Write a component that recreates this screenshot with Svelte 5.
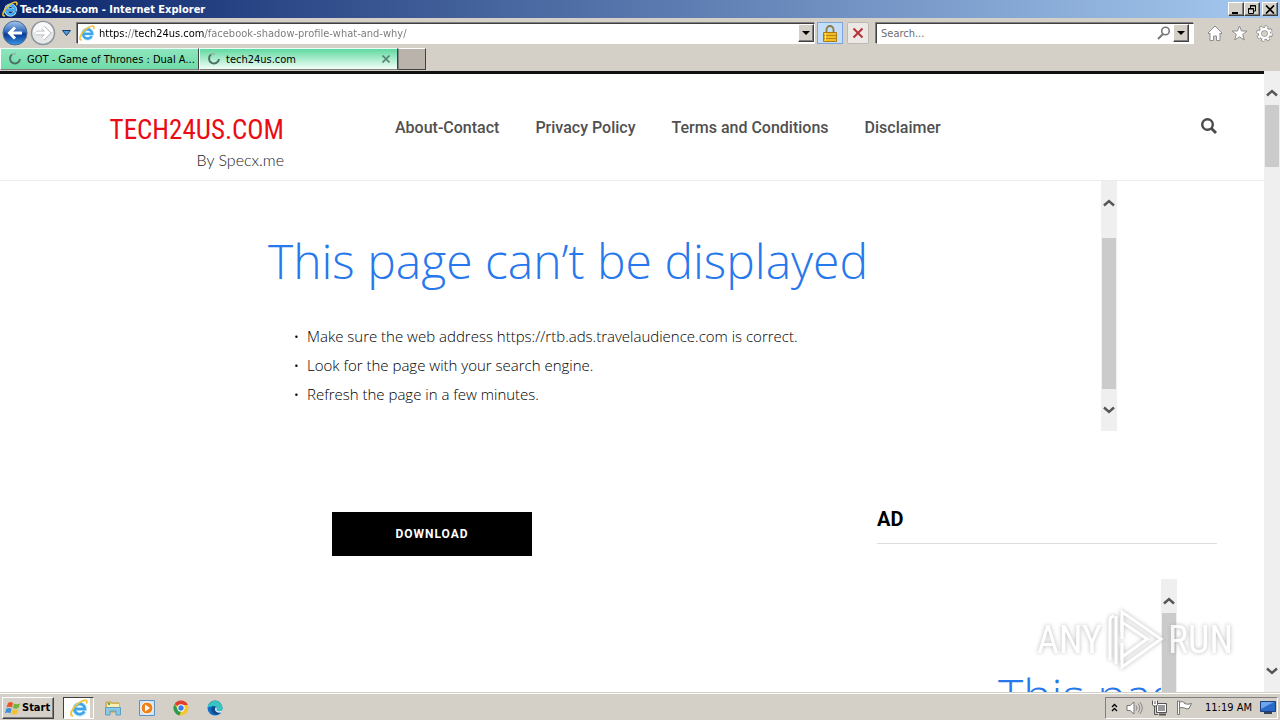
<script>
  let address = $state('https://tech24us.com/facebook-shadow-profile-what-and-why/');
  let query = $state('');

  const menu = [
    { href: '/about-contact', title: 'About-Contact' },
    { href: '/privacy-policy', title: 'Privacy Policy' },
    { href: '/terms-and-conditions', title: 'Terms and Conditions' },
    { href: '/disclaimer', title: 'Disclaimer' }
  ];

  const hints = [
    'Make sure the web address https://rtb.ads.travelaudience.com is correct.',
    'Look for the page with your search engine.',
    'Refresh the page in a few minutes.'
  ];
</script>

{#snippet ieLogo(size)}
  <svg width={size} height={size} viewBox="0 0 16 16" aria-hidden="true">
    <path d="M13 11A4.800 4.800 0 1 1 13.400 8.900H5" fill="none" stroke="#bfe4fb" stroke-width="3.400" />
    <path d="M12.700 11A4.600 4.600 0 1 1 13.200 8.900H5" fill="none" stroke="#3ba6ec" stroke-width="2.400" />
    <path d="M4.500 6.500C5.300 4.700 6.500 4 8.300 4" fill="none" stroke="#a5dcfb" stroke-width="1" />
    <path d="M2.800 14.800C.2 15.500.3 12.500 2.500 9.200 5.500 4.800 10.500 1 13.600 1c1.700 0 1.600 1.600.9 3.200" fill="none" stroke="#f2c437" stroke-width="1.600" />
  </svg>
{/snippet}

{#snippet chevron(down)}
  <svg width="12" height="8" viewBox="0 0 12 8" aria-hidden="true">
    <path d={down ? 'M1 1.500 6 6l5-4.500' : 'M1 6.500 6 2l5 4.500'} fill="none" stroke="#555" stroke-width="2.400" />
  </svg>
{/snippet}

{#snippet scrollbar(offset, length)}
  <div class="scrollbar">
    <button class="up" aria-label="Scroll up">{@render chevron(false)}</button>
    <div class="track">
      <div class="thumb" style="margin-top: {offset}px; height: {length}px"></div>
    </div>
    <button class="down" aria-label="Scroll down">{@render chevron(true)}</button>
  </div>
{/snippet}

{#snippet spinner()}
  <svg width="14" height="14" viewBox="0 0 14 14" aria-hidden="true">
    <path d="M4 2.500A5 5 0 1 0 12 7" fill="none" stroke="#4c7263" stroke-width="2" />
    <path d="M4 2.500A5 5 0 0 1 8 2" fill="none" stroke="#8fbba8" stroke-width="2" />
  </svg>
{/snippet}

<div class="desktop">
  <header class="titlebar">
    {@render ieLogo(16)}
    <span class="title">Tech24us.com - Internet Explorer</span>
    <div class="window-buttons">
      <button aria-label="Minimize">
        <svg width="10" height="9" viewBox="0 0 10 9"><path d="M1 7h6v2H1z" /></svg>
      </button>
      <button aria-label="Restore">
        <svg width="10" height="9" viewBox="0 0 10 9">
          <path d="M3.500 3V.5h5V6H7M3 1h6M1.500 3.500h5v5h-5zM1 4h6" fill="none" stroke="#000" />
        </svg>
      </button>
      <button class="close" aria-label="Close">
        <svg width="10" height="9" viewBox="0 0 10 9">
          <path d="m1 .5 8 8m0-8-8 8" stroke="#000" stroke-width="1.700" />
        </svg>
      </button>
    </div>
  </header>

  <div class="toolbar">
    <button class="plain" aria-label="Back">
      <svg width="26" height="26" viewBox="0 0 26 26">
        <defs>
          <linearGradient id="back" x2="0" y2="1">
            <stop offset="0" stop-color="#a9c8ee" /><stop offset=".45" stop-color="#2e68ba" />
            <stop offset=".55" stop-color="#0a3b95" /><stop offset="1" stop-color="#3998e8" />
          </linearGradient>
        </defs>
        <circle cx="13" cy="13" r="12" fill="url(#back)" stroke="#50698f" />
        <path d="M20 13H8m5-5.500L7.500 13l5.500 5.500" fill="none" stroke="#fff" stroke-width="3" />
      </svg>
    </button>
    <button class="plain" aria-label="Forward">
      <svg width="26" height="26" viewBox="0 0 26 26">
        <circle cx="13" cy="13" r="11.500" fill="#e5e7e9" stroke="#8d959c" stroke-width="1.500" />
        <path d="M3 12a10 10 0 0 1 20 0z" fill="#f8f8f8" />
        <path d="M6 13h12m-5-5.500 5.500 5.500-5.500 5.500" fill="none" stroke="#aeb4ba" stroke-width="4.500" />
        <path d="M6 13h12m-5-5.500 5.500 5.500-5.500 5.500" fill="none" stroke="#fff" stroke-width="3" />
      </svg>
    </button>
    <button class="plain recent" aria-label="Recent pages">
      <svg width="9" height="6" viewBox="0 0 9 6"><path d="M.5.5h8L4.500 5.500z" fill="#4c9be0" stroke="#173c6b" /></svg>
    </button>
    <div class="field address">
      {@render ieLogo(16)}
      <input aria-label="Address" bind:value={address} />
      <button class="drop" aria-label="Show address list">
        <svg width="8" height="4" viewBox="0 0 8 4"><path d="M0 0h8L4 4z" /></svg>
      </button>
    </div>
    <button class="lock" aria-label="Security report">
      <svg width="14" height="17" viewBox="0 0 14 17">
        <path d="M3.500 8V4.500a3.500 3.500 0 0 1 7 0V8" fill="none" stroke="#8c7b3c" stroke-width="1.800" />
        <path d="M.5 7.500h13v9H.5z" fill="#f3bd28" stroke="#a67c13" />
        <path d="M1 10.500h12M1 13.500h12" stroke="#b98510" />
        <path d="M2.500 8v8" stroke="#ffe58a" />
      </svg>
    </button>
    <button class="stop" aria-label="Stop">
      <svg width="12" height="12" viewBox="0 0 12 12"><path d="m1.500 1.500 9 9m0-9-9 9" stroke="#b83239" stroke-width="2" /></svg>
    </button>
    <div class="field search">
      <input aria-label="Search" placeholder="Search..." bind:value={query} />
      <button class="plain" aria-label="Search">
        <svg width="14" height="14" viewBox="0 0 14 14">
          <circle cx="8.500" cy="5" r="3.800" fill="none" stroke="#777" stroke-width="1.600" />
          <path d="m6 8-5 5" stroke="#777" stroke-width="2" />
        </svg>
      </button>
      <button class="drop" aria-label="Search options">
        <svg width="8" height="4" viewBox="0 0 8 4"><path d="M0 0h8L4 4z" /></svg>
      </button>
    </div>
    <div class="tools">
      <button class="plain" aria-label="Home">
        <svg width="16" height="16" viewBox="0 0 16 16">
          <path d="m8 1 7 7-1 1-1-1v7.500H9.500V11h-3v4.500H3V8L2 9 1 8z" fill="#fff" stroke="#8e8e8e" />
        </svg>
      </button>
      <button class="plain" aria-label="Favorites">
        <svg width="17" height="16" viewBox="0 0 17 16">
          <path d="m8.500 1 2 5h5.500l-4.300 3.500 1.600 5.500-4.800-3.200L3.700 15l1.600-5.500L1 6h5.500z" fill="#fff" stroke="#8e8e8e" />
        </svg>
      </button>
      <button class="plain" aria-label="Tools">
        <svg width="17" height="17" viewBox="0 0 17 17">
          <circle cx="8.500" cy="8.500" r="6.800" fill="none" stroke="#8e8e8e" stroke-width="3" stroke-dasharray="3.200 2.140" />
          <circle cx="8.500" cy="8.500" r="4.600" fill="none" stroke="#8e8e8e" stroke-width="4" />
          <circle cx="8.500" cy="8.500" r="6.500" fill="none" stroke="#fff" stroke-width="2" stroke-dasharray="2.200 2.900" />
          <circle cx="8.500" cy="8.500" r="4.500" fill="none" stroke="#fff" stroke-width="2.400" />
        </svg>
      </button>
    </div>
  </div>

  <div class="tabs" role="tablist">
    <button class="tab" role="tab" aria-selected="false">
      {@render spinner()}
      <span>GOT - Game of Thrones : Dual A...</span>
    </button>
    <button class="tab active" role="tab" aria-selected="true">
      {@render spinner()}
      <span>tech24us.com</span>
      <svg class="tab-close" width="8" height="8" viewBox="0 0 8 8" aria-hidden="true">
        <path d="m.5.5 7 7m0-7-7 7" stroke="#5b8573" stroke-width="1.700" />
      </svg>
    </button>
    <button class="new-tab" aria-label="New tab"></button>
  </div>

  <div class="viewport">
    <div class="page">
      <header class="site-header">
        <a class="brand" href="/">
          <span class="brand-name">TECH24US.COM</span>
          <span class="brand-by">By Specx.me</span>
        </a>
        <nav>
          {#each menu as item}
            <a href={item.href}>{item.title}</a>
          {/each}
        </nav>
        <button class="plain" aria-label="Search this site">
          <svg width="16" height="16" viewBox="0 0 16 16">
            <circle cx="6.500" cy="6.500" r="5.300" fill="none" stroke="#4a4a4a" stroke-width="2.400" />
            <path d="m10 10 5 5" stroke="#4a4a4a" stroke-width="2.800" />
          </svg>
        </button>
      </header>

      <section class="banner frame">
        <div class="error">
          <h1>This page can’t be displayed</h1>
          <ul>
            {#each hints as hint}
              <li>{hint}</li>
            {/each}
          </ul>
        </div>
        {@render scrollbar(23, 151)}
      </section>

      <div class="columns">
        <main>
          <button class="download">DOWNLOAD</button>
        </main>
        <aside>
          <h2>AD</h2>
          <section class="side-ad frame">
            <div class="error">
              <h1>This page can’t be displayed</h1>
            </div>
            {@render scrollbar(0, 420)}
          </section>
        </aside>
      </div>
    </div>
    {@render scrollbar(0, 62)}

    <div class="watermark">
      <span>ANY</span>
      <svg width="60" height="64" viewBox="0 0 60 64" aria-hidden="true">
        <g fill="none" stroke="#fff" stroke-width="3">
          <path d="M5 52V12q0-3 4-4M11 56V8" />
          <path d="M17 31V4l39 27-39 28V42" />
          <path d="M17 24V14l25 17-25 18V35" />
        </g>
      </svg>
      <span>RUN</span>
    </div>
  </div>

  <footer class="taskbar">
    <button class="start">
      <svg width="16" height="16" viewBox="0 0 16 16" aria-hidden="true">
        <path d="M3 3q3-2 5 0L7 7.500q-3-1.500-5.500 0z" fill="#e8562a" />
        <path d="M9 3.500q3 1.500 6 0l-1.500 4.500q-3 1.500-5.500 0z" fill="#72b43a" />
        <path d="M1.200 8.800q3-1.600 5.500 0l-1.200 4.500q-3-1.600-5.500 0z" fill="#3f8ed8" />
        <path d="M7.800 9.200q3 1.500 5.500 0l-1.200 4.500q-3 1.500-5.500 0z" fill="#f5c02c" />
      </svg>
      Start
    </button>
    <button class="task running" aria-label="Internet Explorer">{@render ieLogo(18)}</button>
    <button class="task" aria-label="Windows Explorer">
      <svg width="18" height="18" viewBox="0 0 18 18">
        <path d="M2 3h5l1 1h7v9H2z" fill="#e8c867" stroke="#c5a041" />
        <path d="M3 5h12v5H3z" fill="#fbefb4" /><path d="M4 4h2v2H4z" fill="#55a868" />
        <path d="M1.500 8.500h15V16H12v-4H6v4H1.500z" fill="#8dc7e4" stroke="#5c9fc6" />
      </svg>
    </button>
    <button class="task" aria-label="Media Player">
      <svg width="18" height="18" viewBox="0 0 18 18">
        <path d="M1.500 1.500h15v15h-15z" fill="#cfe4f6" stroke="#5f92c0" />
        <circle cx="9" cy="9" r="6" fill="#f08119" stroke="#fff" /><path d="m7 5.500 5 3.500-5 3.500z" fill="#fff" />
      </svg>
    </button>
    <button class="task" aria-label="Chrome">
      <svg width="16" height="16" viewBox="0 0 16 16">
        <circle cx="8" cy="8" r="7.500" fill="#f7c52b" />
        <path d="M8 8 1.500 4.200A7.500 7.500 0 0 1 14.500 4.200L14.700 5H8z" fill="#df3e31" />
        <path d="M1.500 4.200 5.300 10 8 11l-1.500 4.400A7.500 7.500 0 0 1 1.500 4.200" fill="#2d9b4f" />
        <circle cx="8" cy="8" r="3.700" fill="#fff" /><circle cx="8" cy="8" r="2.700" fill="#377ce7" />
      </svg>
    </button>
    <button class="task" aria-label="Edge">
      <svg width="16" height="16" viewBox="0 0 16 16">
        <circle cx="8" cy="8" r="7.500" fill="#126fc2" />
        <path d="M.6 7A7.500 7.500 0 0 1 15.500 8c0 3-3 4-6 2.500 1-1 .8-4.500-3-4.500C3 6 1 8 .6 7" fill="#37c5bd" />
        <path d="M5 7c-2 3 0 7 4 7.500 2 .2 4-.5 5-2-3 1-6-.5-6-3 0-1 1-1.500.8-2C8 6.500 6 6 5 7" fill="#124a91" />
        <path d="M8 9c0-1 1-1.300.8-2 1 .6 1.400 2.400.7 3.500 2 1.200 4 1 6-.5-.5 1.500-1.200 2.200-1.600 2.600C11 13 8 12 8 9" fill="#dff3fa" />
      </svg>
    </button>
    <div class="tray">
      <svg width="7" height="9" viewBox="0 0 7 9" aria-hidden="true">
        <path d="m1 4 2.500-2.500L6 4M1 8l2.500-2.500L6 8" fill="none" stroke="#000" stroke-width="1.300" />
      </svg>
      <svg width="17" height="14" viewBox="0 0 17 14" aria-hidden="true">
        <path d="M1 4.500h3L8 1v12L4 9.500H1z" fill="#fff" stroke="#777" />
        <path d="M10 4.500q2 2.500 0 5M12 2.500q3.500 4.500 0 9M14 1q4.500 6 0 12" fill="none" stroke="#888" />
      </svg>
      <svg width="17" height="16" viewBox="0 0 17 16" aria-hidden="true">
        <path d="M5.500 3.500h10v9h-10z" fill="#999" stroke="#555" />
        <path d="M6.500 4.500h8v7h-8z" fill="none" stroke="#fff" />
        <path d="M8 14.500h7" stroke="#555" stroke-width="2" />
        <path d="M3.500 6v8.500H7" fill="none" stroke="#555" />
        <path d="M1.500.5v4l1 1.500h3l1-1.500v-4M4 1v3" fill="#fff" stroke="#555" />
      </svg>
      <svg width="17" height="15" viewBox="0 0 17 15" aria-hidden="true">
        <path d="M1.500 1h2v13.500h-2z" fill="#fff" stroke="#777" />
        <path d="M3.500 2q3-1 5 .5v1q3 1.500 7 0l-2.500 5q-2 1-4.500-.5-2.500-1-5 0z" fill="#fff" stroke="#777" />
      </svg>
      <time>11:19 AM</time>
      <svg width="16" height="13" viewBox="0 0 16 13" aria-hidden="true">
        <path d="M.5.5h15v10H.5z" fill="#2b69c9" stroke="#1b3f7d" /><path d="M1 1h13L1 8z" fill="#6ba5eb" />
        <path d="M4 12h8" stroke="#345" stroke-width="2" />
      </svg>
    </div>
  </footer>
</div>

<style>
  :global(body) {
    margin: 0;
  }

  .desktop {
    display: flex;
    flex-direction: column;
    height: 100vh;
    overflow: hidden;
    background: #d4d0c8;
    color: #000;
    font-family: 'DejaVu Sans Condensed', 'DejaVu Sans', sans-serif;
    font-size: 11px;
  }

  button,
  input {
    margin: 0;
    padding: 0;
    border: 0;
    font: inherit;
    color: inherit;
  }

  button {
    display: flex;
    align-items: center;
    justify-content: center;
    box-sizing: border-box;
    flex: none;
  }

  svg {
    flex: none;
  }

  .plain {
    background: none;
  }

  .titlebar {
    display: flex;
    align-items: center;
    gap: 2px;
    height: 18px;
    padding: 0 2px;
    background: linear-gradient(90deg, #0a246a, #a6caf0);
    color: #fff;
    font-weight: bold;
  }

  .title {
    flex: 1;
  }

  .window-buttons {
    display: flex;
  }

  .window-buttons button,
  .drop,
  .start {
    background: #d4d0c8;
    border: 1px solid;
    border-color: #fff #404040 #404040 #fff;
    box-shadow: inset -1px -1px #808080;
  }

  .window-buttons button {
    width: 16px;
    height: 14px;
  }

  .window-buttons .close {
    margin-left: 2px;
  }

  .toolbar {
    display: flex;
    align-items: center;
    height: 30px;
    padding: 0 7px 0 1px;
  }

  .toolbar > .plain {
    width: 28px;
  }

  .toolbar > .recent {
    width: 18px;
  }

  .field {
    display: flex;
    align-items: center;
    box-sizing: border-box;
    height: 21px;
    padding: 0 2px;
    background: #fff;
    border: 1px solid;
    border-color: #404040 #fff #fff #404040;
    box-shadow: -1px -1px #808080;
  }

  .field input {
    flex: 1;
    min-width: 0;
    background: none;
    outline: none;
  }

  .address {
    flex: 3;
    gap: 4px;
    margin-left: 2px;
    padding: 0 0 0 1px;
  }

  /* protocol and host stand out, the rest of the address is dimmed */
  .address input {
    color: transparent;
    background: linear-gradient(90deg, #000 28px, #777 28px 36px, #000 36px 106px, #777 106px);
    background-clip: text;
  }

  .drop {
    width: 16px;
    height: 18px;
  }

  .lock {
    width: 26px;
    height: 22px;
    margin-left: 2px;
    background: #c4ddf8;
    border: 1px solid #7da7dc;
  }

  .stop {
    width: 22px;
    height: 22px;
    margin: 0 7px 0 4px;
    background: #ebe8e6;
    border: 1px solid #bcb8b2;
    border-radius: 2px;
  }

  .search {
    width: 25%;
    padding-left: 4px;
  }

  .search input::placeholder {
    color: #6d6d6d;
    opacity: 1;
  }

  .search .drop {
    margin: 0 2px;
  }

  .tools {
    display: flex;
    gap: 8px;
    margin-left: 13px;
  }

  .tabs {
    display: flex;
    height: 23px;
    box-sizing: border-box;
    padding-bottom: 1px;
  }

  .tab {
    width: 199px;
    justify-content: flex-start;
    gap: 5px;
    padding: 0 7px;
    background: linear-gradient(#8ee5bd, #70dba9);
    border: 1px solid;
    border-color: #eafff5 #404040 #808080 #fff;
    white-space: nowrap;
  }

  .tab.active {
    background: linear-gradient(#5fd9a0, #f4fffa);
  }

  .tab-close {
    margin-left: auto;
  }

  .new-tab {
    width: 28px;
    background: #b9b3ac;
    border: 1px solid;
    border-color: #fff #404040 #404040 #808080;
  }

  .viewport {
    position: relative;
    display: flex;
    flex: 1;
    min-height: 0;
  }

  .page {
    flex: 1;
    min-width: 0;
    overflow: hidden;
    background: #fff;
    border-top: 3px solid #111;
    font-family: Roboto, sans-serif;
  }

  .scrollbar {
    display: flex;
    flex-direction: column;
    flex: none;
    width: 16px;
    background: #efefef;
  }

  .scrollbar button {
    background: none;
  }

  .up {
    height: 34px;
    padding-top: 10px;
  }

  .down {
    height: 34px;
    padding-bottom: 8px;
  }

  .track {
    flex: 1;
    min-height: 0;
    overflow: hidden;
  }

  .thumb {
    margin: 0 1px;
    background: #cbcbcb;
  }

  .site-header {
    display: flex;
    box-sizing: border-box;
    height: 107px;
    padding: 0 47px 0 110px;
    border-bottom: 1px solid #ececec;
  }

  .brand {
    display: flex;
    flex-direction: column;
    align-items: flex-end;
    width: 174px;
    padding-top: 36px;
    text-decoration: none;
  }

  .brand-name {
    color: #ea0c14;
    font: 400 27px/40px 'Roboto Condensed', 'Liberation Sans Narrow', sans-serif;
  }

  .brand-by {
    color: #222;
    font: 300 16px/20px Lato, sans-serif;
  }

  nav {
    display: flex;
    flex: 1;
    gap: 36px;
    margin-left: 111px;
    line-height: 107px;
  }

  nav a {
    color: #505050;
    font-size: 16px;
    font-weight: 500;
    text-decoration: none;
  }

  .site-header .plain {
    height: 103px;
  }

  .frame {
    display: flex;
    font-family: 'Open Sans', sans-serif;
    font-weight: 300;
  }

  .error {
    flex: 1;
    min-width: 0;
    overflow: hidden;
    padding-left: 121px;
    white-space: nowrap;
  }

  .error h1 {
    margin: 44px 0 0;
    color: #2778ec;
    font-size: 48px;
    font-weight: 300;
    line-height: 72px;
  }

  .error ul {
    margin: 25px 0 0;
    padding-left: 39px;
    font-size: 15px;
    line-height: 29px;
    list-style-type: '•\00a0\00a0';
  }

  .banner {
    height: 250px;
    max-width: 970px;
    margin: 0 auto;
  }

  .columns {
    display: flex;
    justify-content: space-between;
    padding: 70px 47px 0;
  }

  main {
    flex: 1;
    max-width: 770px;
    padding-top: 11px;
  }

  .download {
    width: 200px;
    height: 44px;
    margin: 0 auto;
    background: #000;
    color: #fff;
    font-size: 12px;
    font-weight: 700;
    letter-spacing: 1px;
  }

  aside {
    width: 340px;
  }

  h2 {
    margin: 0 0 35px;
    padding-bottom: 6px;
    border-bottom: 1px solid #ddd;
    font-size: 20px;
    font-weight: 700;
    line-height: 36px;
  }

  .side-ad {
    width: 300px;
    height: 600px;
  }

  .side-ad .error h1 {
    margin-top: 81px;
  }

  .watermark {
    position: absolute;
    right: 47px;
    bottom: 20px;
    display: flex;
    align-items: center;
    gap: 3px;
    color: #fff;
    font: 38px/64px 'Roboto Condensed', 'Liberation Sans Narrow', sans-serif;
    opacity: 0.85;
    filter: drop-shadow(0 0 2px #aaa);
    pointer-events: none;
  }

  .taskbar {
    display: flex;
    align-items: center;
    box-sizing: border-box;
    height: 28px;
    padding: 2px 2px 0 2px;
    border-top: 1px solid #d4d0c8;
    box-shadow: inset 0 1px #fff;
  }

  .start {
    gap: 1px;
    height: 22px;
    padding: 0 3px 0 2px;
    font-weight: bold;
  }

  .task {
    width: 34px;
    height: 22px;
    background: none;
  }

  .running {
    width: 31px;
    margin: 0 2px 0 9px;
    background: #fff;
    border: 1px solid;
    border-color: #404040 #fff #fff #404040;
    box-shadow: inset -3px 0 #d4d0c8;
  }

  .tray {
    display: flex;
    align-items: center;
    gap: 8px;
    height: 20px;
    margin-left: auto;
    padding: 0 1px 0 5px;
    border: 1px solid;
    border-color: #808080 #fff #fff #808080;
  }

  time {
    margin-left: 4px;
  }
</style>
